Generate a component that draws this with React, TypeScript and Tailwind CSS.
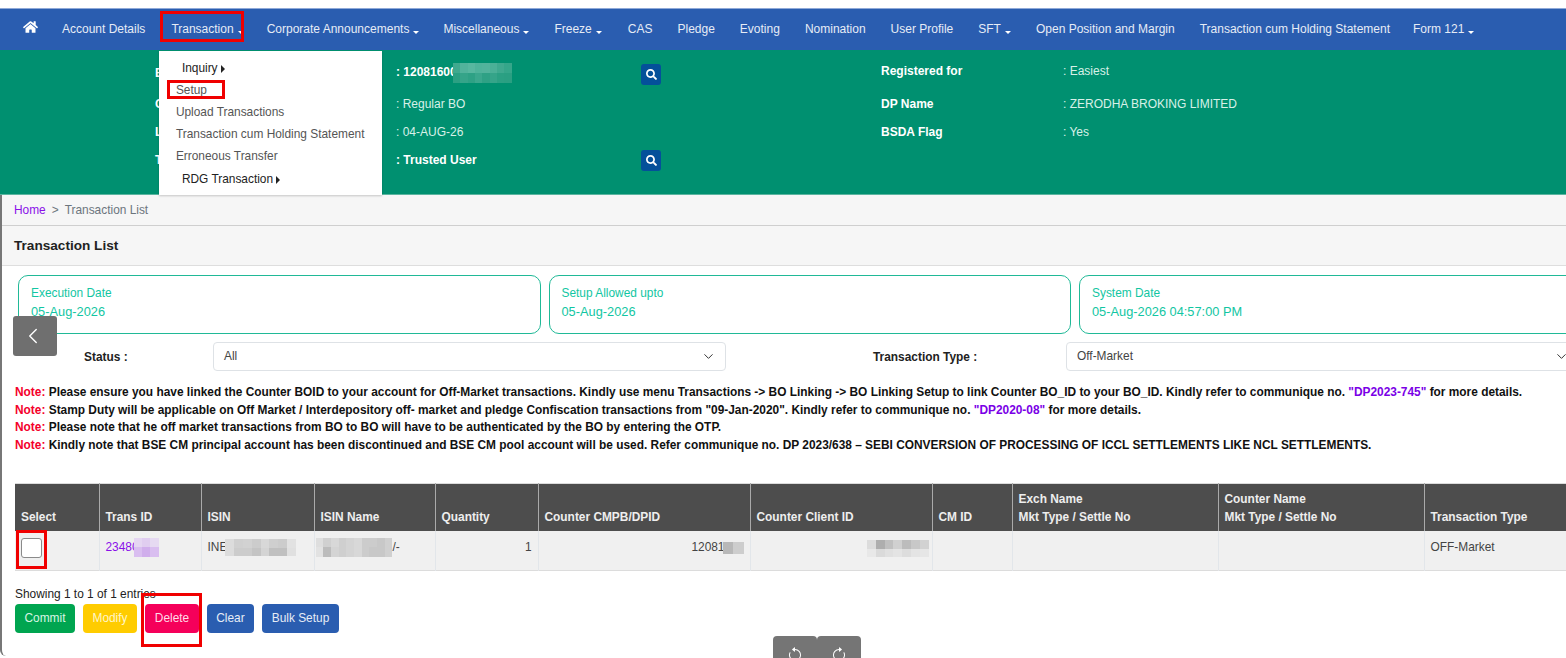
import React from "react";
import { FaHome, FaSearch } from "react-icons/fa";
import { BsArrowClockwise, BsArrowCounterclockwise } from "react-icons/bs";
import { ChevronLeft, ChevronDown } from "lucide-react";

const Caret = ({ right }: { right?: boolean }) =>
  right ? (
    <span className="ml-[3px] inline-block h-0 w-0 border-y-[4px] border-l-[4px] border-y-transparent border-l-[#222] align-[-1px]" />
  ) : (
    <span className="ml-[4px] inline-block h-0 w-0 border-x-[3px] border-t-[3px] border-x-transparent border-t-white align-[-1px]" />
  );

const Mosaic = ({ cols, cell, rowH, colors, className }: { cols: number; cell: number; rowH: number; colors: string[]; className?: string }) => (
  <span
    className={"relative inline-grid align-middle " + (className ?? "")}
    style={{ gridTemplateColumns: `repeat(${cols}, ${cell}px)`, gridAutoRows: `${rowH}px` }}
  >
    {colors.map((c, i) => (
      <span key={i} style={{ backgroundColor: c }} />
    ))}
  </span>
);

const navItems: { t: string; c?: boolean; m: string }[] = [
  { t: "Corporate Announcements", c: true, m: "mr-[24px]" },
  { t: "Miscellaneous", c: true, m: "mr-[25px]" },
  { t: "Freeze", c: true, m: "mr-[26px]" },
  { t: "CAS", m: "mr-[25px]" },
  { t: "Pledge", m: "mr-[25px]" },
  { t: "Evoting", m: "mr-[25px]" },
  { t: "Nomination", m: "mr-[25px]" },
  { t: "User Profile", m: "mr-[25px]" },
  { t: "SFT", c: true, m: "mr-[25px]" },
  { t: "Open Position and Margin", m: "mr-[25px]" },
  { t: "Transaction cum Holding Statement", m: "mr-[23px]" },
  { t: "Form 121", c: true, m: "mr-[25px]" },
];

const Menu = () => (
  <div className="absolute left-[-12px] top-[31px] z-20 flex h-[144px] w-[223px] flex-col bg-white pt-[5.5px] text-[11.9px] leading-[22.2px] text-[#555] shadow-[0_1px_2px_rgba(0,0,0,0.2)]">
    <div className="pl-[22.5px] text-[#222]">Inquiry<Caret right /></div>
    <div className="relative pl-[16.5px]">
      Setup
      <span className="absolute left-[8px] top-[1px] h-[19px] w-[58px] border-[3px] border-[#f00000]" />
    </div>
    <div className="pl-[16.5px]">Upload Transactions</div>
    <div className="pl-[16.5px]">Transaction cum Holding Statement</div>
    <div className="pl-[16.5px]">Erroneous Transfer</div>
    <div className="pl-[22.5px] text-[#222]">RDG Transaction<Caret right /></div>
  </div>
);

const Nav = () => (
  <nav className="flex h-[42px] items-center border-t border-[#8fa9d8] bg-[#2a5db0] pb-[1px] pl-[23px] text-[12px] text-[#e6ecf6]">
    <FaHome className="mr-[24px] h-[14px] w-[15px] -translate-y-[2px] text-white" />
    <span className="mr-[26px]">Account Details</span>
    <span className="relative mr-[23px] whitespace-nowrap">
      Transaction<Caret />
      <span className="absolute left-[-11px] top-[-9px] h-[31px] w-[84px] border-[3px] border-[#f00000]" />
      <Menu />
    </span>
    {navItems.map(({ t, c, m }) => (
      <span key={t} className={"whitespace-nowrap " + m}>
        {t}
        {c && <Caret />}
      </span>
    ))}
  </nav>
);

const SearchBtn = ({ className }: { className: string }) => (
  <span className={"flex h-[21px] w-[20px] items-center justify-center rounded-[3px] bg-[#04509a] " + className}>
    <FaSearch className="h-[11px] w-[11px] text-white" />
  </span>
);

const Info = () => (
  <section className="grid h-[145px] grid-cols-[155px_241px_245px_240px_182px_1fr] grid-rows-[32px_29px_27px_29px] content-start items-center border-b border-[#5bb5a0] bg-[#009070] pt-[7px] text-[12px] text-[#d8f0e8]">
    <div />
    <div className="font-bold text-white">B</div>
    <div className="font-bold text-white">
      <span className="whitespace-nowrap">: 12081600
        <Mosaic
          cols={8}
          cell={7.4}
          rowH={10}
          className="-ml-[4px]"
          colors={["#3fa98f", "#52b39c", "#58b7a0", "#4fb39b", "#52b39c", "#4bb097", "#3fa98f", "#35a68a", "#2ba083", "#35a489", "#2ea185", "#3aa78d", "#2ea185", "#35a489", "#2ba083", "#2a9f82"]}
        />
      </span>
    </div>
    <div><SearchBtn className="translate-y-[1px]" /></div>
    <div className="-translate-y-[2px] font-bold text-white">Registered for</div>
    <div className="-translate-y-[2px]">: Easiest</div>

    <div className="col-start-2 font-bold text-white">C</div>
    <div>: Regular BO</div>
    <div />
    <div className="font-bold text-white">DP Name</div>
    <div>: ZERODHA BROKING LIMITED</div>

    <div className="col-start-2 font-bold text-white">L</div>
    <div>: 04-AUG-26</div>
    <div />
    <div className="font-bold text-white">BSDA Flag</div>
    <div>: Yes</div>

    <div className="col-start-2 font-bold text-white">T</div>
    <div className="font-bold text-white">: Trusted User</div>
    <div><SearchBtn className="translate-y-[1px]" /></div>
  </section>
);

const Card = ({ label, value }: { label: string; value: string }) => (
  <div className="flex h-[59px] w-[522.5px] flex-none flex-col rounded-[10px] border border-[#20b997] pl-[12px] pt-[9px] text-[#12c6a2]">
    <div className="text-[11.9px] leading-[16px]">{label}</div>
    <div className="mt-[2px] text-[12.8px] leading-[18px]">{value}</div>
  </div>
);

const Select = ({ value }: { value: string }) => (
  <div className="flex h-[29px] w-[513px] flex-none items-center justify-between rounded-[4px] border border-[#dee2e6] bg-white pl-[10px] pr-[9px] text-[11.9px] text-[#444]">
    <span>{value}</span>
    <ChevronDown className="h-[15px] w-[15px] text-[#333]" strokeWidth={1.6} />
  </div>
);

const Note = ({ children }: { children: React.ReactNode }) => (
  <p className="whitespace-nowrap">
    <span className="text-[#f4002b]">Note:</span> {children}
  </p>
);

const Notes = () => (
  <div className="ml-[13px] mt-[13px] text-[11.9px] font-bold leading-[17.7px] text-[#111]">
    <Note>
      Please ensure you have linked the Counter BOID to your account for Off-Market transactions. Kindly use menu Transactions -&gt; BO Linking -&gt; BO Linking Setup to link Counter BO_ID to your BO_ID. Kindly refer to communique no. <span className="text-[#7a00e6]">"DP2023-745"</span> for more details.
    </Note>
    <Note>
      Stamp Duty will be applicable on Off Market / Interdepository off- market and pledge Confiscation transactions from "09-Jan-2020". Kindly refer to communique no. <span className="text-[#7a00e6]">"DP2020-08"</span> for more details.
    </Note>
    <Note>Please note that he off market transactions from BO to BO will have to be authenticated by the BO by entering the OTP.</Note>
    <Note>
      Kindly note that BSE CM principal account has been discontinued and BSE CM pool account will be used. Refer communique no. DP 2023/638 – SEBI CONVERSION OF PROCESSING OF ICCL SETTLEMENTS LIKE NCL SETTLEMENTS.
    </Note>
  </div>
);

const Th = ({ children, className }: { children: React.ReactNode; className?: string }) => (
  <th className={"h-[48px] border-x border-[#aaaaaa] px-[6px] pb-[5px] align-bottom text-left text-[11.9px] font-bold leading-[18px] text-[#eeeeee] " + (className ?? "")}>{children}</th>
);

const Td = ({ children, className }: { children?: React.ReactNode; className?: string }) => (
  <td className={"h-[39px] overflow-visible border-x border-[#e2e6ea] px-[6px] pb-[5px] align-middle text-[11.9px] " + (className ?? "text-[#444]")}>{children}</td>
);

const Table = () => (
  <table className="ml-[13px] mt-[28px] w-[1700px] table-fixed border-collapse border-y border-[#dcdcdc]">
    <colgroup>
      <col className="w-[84px]" />
      <col className="w-[102px]" />
      <col className="w-[113px]" />
      <col className="w-[121px]" />
      <col className="w-[103px]" />
      <col className="w-[212px]" />
      <col className="w-[182px]" />
      <col className="w-[80px]" />
      <col className="w-[206px]" />
      <col className="w-[206px]" />
      <col className="w-[291px]" />
    </colgroup>
    <thead className="bg-[#4d4d4d]">
      <tr>
        <Th className="border-l-0">Select</Th>
        <Th>Trans ID</Th>
        <Th>ISIN</Th>
        <Th>ISIN Name</Th>
        <Th>Quantity</Th>
        <Th>Counter CMPB/DPID</Th>
        <Th>Counter Client ID</Th>
        <Th>CM ID</Th>
        <Th>Exch Name<br />Mkt Type / Settle No</Th>
        <Th>Counter Name<br />Mkt Type / Settle No</Th>
        <Th>Transaction Type</Th>
      </tr>
    </thead>
    <tbody className="bg-[#f0f0f0]">
      <tr>
        <td className="relative h-[39px] align-top">
          <span className="absolute left-[6px] top-[7px] h-[20px] w-[21px] rounded-[3px] border border-[#8a8a8a] bg-white" />
          <span className="absolute left-[1px] top-[-1px] h-[39px] w-[31px] border-[3px] border-[#f00000]" />
        </td>
        <Td className="text-[#8a10e8]">
          <span className="whitespace-nowrap">23480
            <Mosaic cols={3} cell={8.4} rowH={9.5} className="-top-[1px] -ml-[5px]" colors={["#e5d6f2", "#e0cdf0", "#e6daf2", "#d9bef0", "#d0aeec", "#d9bef0"]} />
          </span>
        </Td>
        <Td>
          <span className="whitespace-nowrap">INE
            <Mosaic cols={8} cell={8.8} rowH={8.5} className="-ml-[2px]" colors={["#dcdcdc", "#d0d0d0", "#d2d2d2", "#cccccc", "#d8d8d8", "#cfcfcf", "#cccccc", "#e2e2e2", "#dcdcdc", "#cccccc", "#cccccc", "#c4c4c4", "#d4d4d4", "#c0c0c0", "#c0c0c0", "#e0e0e0"]} />
          </span>
        </Td>
        <Td>
          <span className="whitespace-nowrap">
            <Mosaic cols={10} cell={7.7} rowH={9.5} className="-top-[1px] -ml-[5px]" colors={["#dedede", "#d0d0d0", "#d8d8d8", "#cfcfcf", "#d4d4d4", "#d8d8d8", "#cccccc", "#cccccc", "#c8c8c8", "#d0d0d0", "#e2e2e2", "#bcbcbc", "#d4d4d4", "#cfcfcf", "#d4d4d4", "#d8d8d8", "#cccccc", "#c8c8c8", "#c8c8c8", "#d0d0d0"]} />/-
          </span>
        </Td>
        <Td className="text-right text-[#444]">1</Td>
        <Td className="text-right text-[#444]">
          <span className="whitespace-nowrap">12081
            <Mosaic cols={2} cell={10.5} rowH={12} className="-ml-[2px]" colors={["#b8b8b8", "#cdcdcd"]} />
          </span>
        </Td>
        <Td className="text-right text-[#444]">
          <span className="whitespace-nowrap">
            <Mosaic cols={7} cell={8.8} rowH={8.5} className="top-[1px] -mr-[3px]" colors={["#dcdcdc", "#aeaeae", "#c0c0c0", "#d0d0d0", "#bcbcbc", "#c8c8c8", "#d2d2d2", "#e8e8e8", "#dadada", "#e0e0e0", "#e4e4e4", "#dddddd", "#e4e4e4", "#e6e6e6"]} />
          </span>
        </Td>
        <Td />
        <Td />
        <Td />
        <Td>OFF-Market</Td>
      </tr>
    </tbody>
  </table>
);

const Btn = ({ children, className }: { children: React.ReactNode; className: string }) => (
  <button className={"flex h-[29px] items-center justify-center rounded-[4px] pt-[1px] text-[11.9px] " + className}>{children}</button>
);

const Actions = () => (
  <div className="ml-[13px]">
    <div className="mt-[16px] text-[11.9px] leading-[15px] text-[#222]">Showing 1 to 1 of 1 entries</div>
    <div className="mt-[2px] flex gap-[8px]">
      <Btn className="w-[60px] bg-[#00a550] text-[#d8f5e4]">Commit</Btn>
      <Btn className="w-[54px] bg-[#ffcc00] text-[#fff6c9]">Modify</Btn>
      <span className="relative">
        <Btn className="w-[54px] bg-[#f5005a] text-[#ffdce8]">Delete</Btn>
        <span className="absolute left-[-4px] top-[-11px] h-[54px] w-[61px] border-[3px] border-[#f00000]" />
      </span>
      <Btn className="w-[47px] bg-[#2a5db0] text-[#e6ecf6]">Clear</Btn>
      <Btn className="w-[77px] bg-[#2a5db0] text-[#e6ecf6]">Bulk Setup</Btn>
    </div>
  </div>
);

export default function App() {
  return (
    <div className="relative h-[658px] w-[1566px] overflow-hidden bg-white font-['Liberation_Sans',Arial,sans-serif]">
      <div className="h-[8px]" />
      <Nav />
      <Info />
      <main className="h-[461px] rounded-bl-[6px] border-l-2 border-[#777]">
        <div className="flex h-[31px] items-center border-b border-[#cfcfcf] bg-[#f6f6f6] pl-[12px] pt-[2px] text-[11.9px] text-[#6c757d]">
          <span className="text-[#8a10e8]">Home</span>
          <span className="mx-[6px]">&gt;</span>
          <span>Transaction List</span>
        </div>
        <div className="flex h-[40px] items-center border-b border-[#dedede] bg-[#f6f6f6] pl-[12px] pt-[2px] text-[13.6px] font-bold text-[#222]">Transaction List</div>
        <div className="ml-[16px] mt-[9px] flex gap-[8px]">
          <Card label="Execution Date" value="05-Aug-2026" />
          <Card label="Setup Allowed upto" value="05-Aug-2026" />
          <Card label="System Date" value="05-Aug-2026 04:57:00 PM" />
        </div>
        <div className="mt-[8px] flex items-center">
          <div className="w-[211px] flex-none translate-y-[1px] pl-[82px] text-[11.9px] font-bold text-[#222]">Status :</div>
          <Select value="All" />
          <div className="w-[340px] flex-none translate-y-[1px] pl-[147px] text-[11.9px] font-bold text-[#222]">Transaction Type :</div>
          <Select value="Off-Market" />
        </div>
        <Notes />
        <Table />
        <Actions />
      </main>
      <button className="absolute left-[13px] top-[316px] z-10 flex h-[40px] w-[44px] items-center justify-center rounded-[3px] bg-[#6f6f6f]">
        <ChevronLeft className="h-[26px] w-[26px] -translate-x-[2px] text-white" strokeWidth={1.3} />
      </button>
      <div className="absolute left-[773px] top-[636px] z-10 flex">
        <button className="flex h-[40px] w-[44px] justify-center rounded-[4px] bg-[#757575] pt-[11px]">
          <BsArrowCounterclockwise className="h-[16px] w-[16px] text-white" />
        </button>
        <button className="flex h-[40px] w-[44px] justify-center rounded-[4px] bg-[#757575] pt-[11px]">
          <BsArrowClockwise className="h-[16px] w-[16px] text-white" />
        </button>
      </div>
    </div>
  );
}
